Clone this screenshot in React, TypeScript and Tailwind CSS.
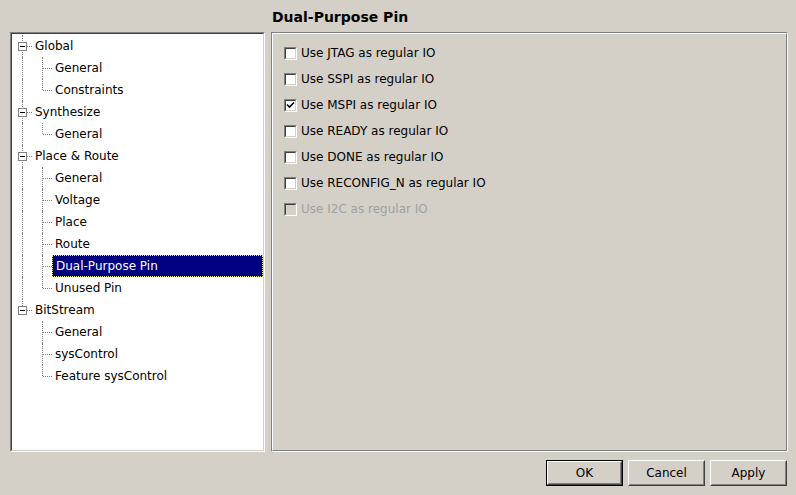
import React from 'react';

type Node = { label: string; children?: string[] };

const TREE: Node[] = [
  { label: 'Global', children: ['General', 'Constraints'] },
  { label: 'Synthesize', children: ['General'] },
  { label: 'Place & Route', children: ['General', 'Voltage', 'Place', 'Route', 'Dual-Purpose Pin', 'Unused Pin'] },
  { label: 'BitStream', children: ['General', 'sysControl', 'Feature sysControl'] },
];

const OPTIONS = [
  { label: 'Use JTAG as regular IO', checked: false },
  { label: 'Use SSPI as regular IO', checked: false },
  { label: 'Use MSPI as regular IO', checked: true },
  { label: 'Use READY as regular IO', checked: false },
  { label: 'Use DONE as regular IO', checked: false },
  { label: 'Use RECONFIG_N as regular IO', checked: false },
  { label: 'Use I2C as regular IO', checked: false, disabled: true },
];

// vertical dotted connector inside a 20px gutter
const VLine = ({ half }: { half?: boolean }) => (
  <div className={`absolute left-[10px] top-0 w-0 border-l border-dotted border-[#808080] ${half ? 'h-[11px]' : 'h-full'}`} />
);

const HLine = ({ from }: { from: number }) => (
  <div className="absolute top-[11px] right-0 h-0 border-t border-dotted border-[#808080]" style={{ left: from }} />
);

const TopRow = ({ label, last }: { label: string; last: boolean }) => (
  <div className="flex h-[22px] items-center">
    <div className="relative h-full w-[20px] shrink-0">
      <VLine half={last} />
      <HLine from={15} />
      <div className="absolute left-[6px] top-[7px] flex h-[9px] w-[9px] items-center justify-center border border-[#808080] bg-white">
        <div className="h-px w-[5px] bg-black" />
      </div>
    </div>
    <span className="pl-[3px] text-black">{label}</span>
  </div>
);

const ChildRow = ({ label, parentLast, last, selected }: { label: string; parentLast: boolean; last: boolean; selected?: boolean }) => (
  <div className="flex h-[22px] items-center">
    <div className="relative h-full w-[20px] shrink-0">{!parentLast && <VLine />}</div>
    <div className="relative h-full w-[20px] shrink-0">
      <VLine half={last} />
      <HLine from={11} />
    </div>
    <div
      className={`flex h-full flex-1 items-center pl-[3px] ${
        selected ? 'border border-dotted border-[#e8e890] bg-[#000080] pl-[2px] text-white' : 'text-black'
      }`}
    >
      {label}
    </div>
  </div>
);

const CheckBox = ({ checked, disabled }: { checked: boolean; disabled?: boolean }) => (
  <div className="h-[13px] w-[13px] shrink-0 border border-[#808080] border-b-white border-r-white">
    <div className={`relative h-full w-full border border-[#404040] border-b-[#d4d0c8] border-r-[#d4d0c8] ${disabled ? 'bg-[#d4d0c8]' : 'bg-white'}`}>
      {checked && (
        <svg className="absolute left-0 top-0" width="9" height="9" viewBox="0 0 9 9">
          <path d="M1 3.5 L3.5 6 L8 1.5" stroke="black" strokeWidth="1.6" fill="none" />
        </svg>
      )}
    </div>
  </div>
);

const Button = ({ label, isDefault }: { label: string; isDefault?: boolean }) => (
  <div className={`h-[26px] w-[77px] ${isDefault ? 'border border-black' : ''}`}>
    <div className="h-full w-full border border-white border-b-[#404040] border-r-[#404040]">
      <div className="flex h-full w-full items-center justify-center border border-transparent border-b-[#808080] border-r-[#808080] text-black">
        {label}
      </div>
    </div>
  </div>
);

export default function App() {
  return (
    <div className="h-[495px] w-[796px] overflow-hidden bg-[#d4d0c8] text-[12px]" style={{ fontFamily: '"DejaVu Sans", sans-serif' }}>
      <div className="grid grid-cols-[255px_517px] gap-x-[6px] pl-[10px]">
        <div />
        <div className="h-[32px] pl-[1px] pt-[8px] text-[14px] font-bold leading-[18px] text-black">Dual-Purpose Pin</div>

        {/* Tree view */}
        <div className="h-[420px] border border-[#808080] border-b-white border-r-white">
          <div className="h-full border border-[#404040] border-b-[#d4d0c8] border-r-[#d4d0c8] bg-white pt-px">
            {TREE.map((n, i) => {
              const last = i === TREE.length - 1;
              return (
                <div key={n.label}>
                  <TopRow label={n.label} last={last} />
                  {n.children?.map((c, j) => (
                    <ChildRow
                      key={c + j}
                      label={c}
                      parentLast={last}
                      last={j === (n.children?.length ?? 0) - 1}
                      selected={c === 'Dual-Purpose Pin'}
                    />
                  ))}
                </div>
              );
            })}
          </div>
        </div>

        {/* Option page */}
        <div className="h-[420px] border border-[#808080] border-b-white border-r-white">
          <div className="h-full border border-white border-b-[#808080] border-r-[#808080] pl-[11px] pt-[6px]">
            {OPTIONS.map((o) => (
              <div key={o.label} className="flex h-[26px] items-center gap-[4px]">
                <CheckBox checked={o.checked} disabled={o.disabled} />
                <span className={o.disabled ? 'text-[#a0a0a0]' : 'text-black'}>{o.label}</span>
              </div>
            ))}
          </div>
        </div>
      </div>

      <div className="mt-[8px] flex justify-end gap-[5px] pr-[9px]">
        <Button label="OK" isDefault />
        <Button label="Cancel" />
        <Button label="Apply" />
      </div>
    </div>
  );
}
